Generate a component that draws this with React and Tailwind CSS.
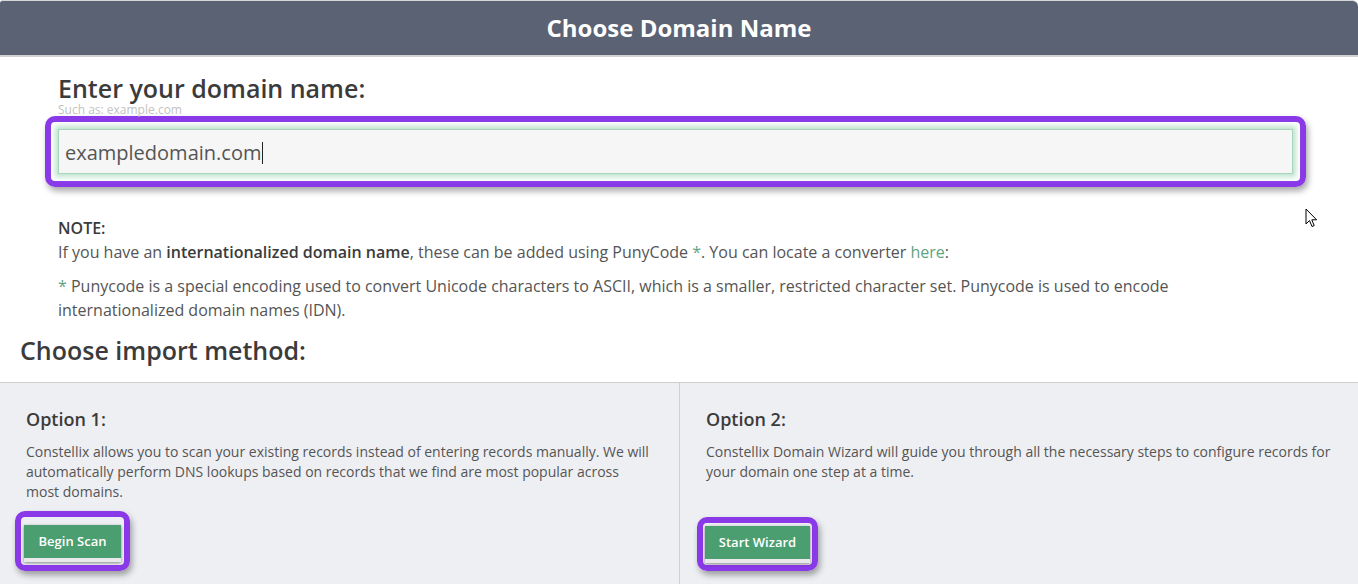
const Highlight = ({ className = '', children }) => (
  <div className={`border-[6px] border-[#8a39e8] rounded-[10px] shadow-[2px_4px_6px_rgba(0,0,0,0.35)] ${className}`}>
    {children}
  </div>
);

const GreenButton = ({ label, className = '' }) => (
  <button className={`h-[33px] bg-[#4b9e6f] text-white text-[13px] font-semibold shadow-[0_1px_3px_rgba(0,0,0,0.45)] border-b-[4px] border-[#e9e9ec] box-content ${className}`}>
    {label}
  </button>
);

const Cursor = () => (
  <svg className="absolute left-[1305px] top-[208px]" width="13" height="20" viewBox="0 0 13 20">
    <path d="M1 1 L1 16 L4.5 12.5 L7 18.5 L9.2 17.6 L6.8 11.8 L11.6 11.8 Z" fill="#fff" stroke="#000" strokeWidth="1" strokeLinejoin="round" />
  </svg>
);

const App = () => {
  return (
    <div className="relative min-h-screen bg-white font-['Open_Sans',sans-serif] text-[#555]">
      <header className="h-[57px] bg-[#5a6273] border-t border-t-[#d6d6d6] border-b-2 border-b-[#d0d0d0] rounded-tr-[6px] rounded-tl-[3px] flex items-center justify-center">
        <h1 className="text-[24px] font-bold text-white leading-none">Choose Domain Name</h1>
      </header>

      <div className="pl-[58px] pr-[65px]">
        <h2 className="mt-[17px] text-[25px] leading-[29px] font-semibold text-[#3b3b3b]">Enter your domain name:</h2>
        <p className="text-[12px] leading-[14px] text-[#c2c2c2]">Such as: example.com</p>
        <Highlight className="-mt-[1px] -mx-[13px] p-[7px]">
          <div className="h-[45px] bg-[#f6f6f6] border border-[#a8d6bd] shadow-[0_0_5px_3px_#bfe3cf] flex items-center pt-[3px] pl-[6px] text-[20px] text-[#555]">
            <span>exampledomain.com</span>
            <span className="ml-[1px] w-px h-[22px] bg-[#222]" />
          </div>
        </Highlight>

        <div className="mt-[29px] text-[16px] leading-[24px]">
          <p className="font-semibold text-[#3b3b3b]">NOTE:</p>
          <p>
            If you have an <span className="font-semibold text-[#3b3b3b]">internationalized domain name</span>, these can be added using PunyCode <span className="text-[#5fa383]">*</span>. You can locate a converter <a className="text-[#5fa383]" href="#">here</a>:
          </p>
          <p className="mt-[10px]">
            <span className="text-[#5fa383]">*</span> Punycode is a special encoding used to convert Unicode characters to ASCII, which is a smaller, restricted character set. Punycode is used to encode internationalized domain names (IDN).
          </p>
        </div>
      </div>

      <h2 className="mt-[14px] px-[20px] text-[25px] leading-[29px] font-semibold text-[#3b3b3b]">Choose import method:</h2>

      <div className="mt-[17px] grid grid-cols-[680px_1fr] bg-[#eeeff3] border-t border-[#cfcfcf] h-[202px]">
        <div className="border-r border-[#cfcfcf] px-[26px] pt-[24px]">
          <h3 className="text-[18px] leading-[24px] font-semibold text-[#3b3b3b]">Option 1:</h3>
          <p className="mt-[11px] text-[14px] leading-[20px]">
            Constellix allows you to scan your existing records instead of entering records manually. We will automatically perform DNS lookups based on records that we find are most popular across most domains.
          </p>
          <Highlight className="mt-[9px] -ml-[11px] w-[115px] h-[60px] rounded-[9px] pt-[8px] pl-[3px]">
            <GreenButton label="Begin Scan" className="w-[97px]" />
          </Highlight>
        </div>
        <div className="px-[26px] pt-[24px]">
          <h3 className="text-[18px] leading-[24px] font-semibold text-[#3b3b3b]">Option 2:</h3>
          <p className="mt-[11px] text-[14px] leading-[20px]">
            Constellix Domain Wizard will guide you through all the necessary steps to configure records for your domain one step at a time.
          </p>
          <Highlight className="mt-[35px] -ml-[9px] w-[121px] h-[54px] rounded-[9px] pt-[3px] pl-[2px]">
            <GreenButton label="Start Wizard" className="w-[105px]" />
          </Highlight>
        </div>
      </div>

      <Cursor />
    </div>
  );
};

export default App;
